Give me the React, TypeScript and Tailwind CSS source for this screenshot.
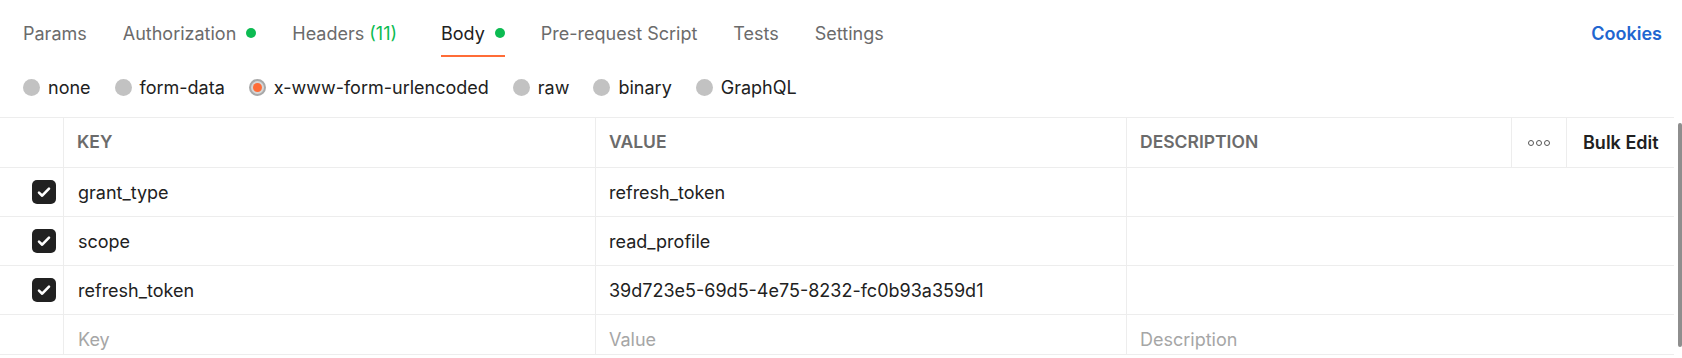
import React from "react";

const tabs = [
  { label: "Params" },
  { label: "Authorization", dot: true },
  { label: "Headers", count: "(11)" },
  { label: "Body", dot: true, active: true },
  { label: "Pre-request Script" },
  { label: "Tests" },
  { label: "Settings" },
];

const bodyTypes = ["none", "form-data", "x-www-form-urlencoded", "raw", "binary", "GraphQL"];

const rows = [
  { key: "grant_type", value: "refresh_token" },
  { key: "scope", value: "read_profile" },
  { key: "refresh_token", value: "39d723e5-69d5-4e75-8232-fc0b93a359d1" },
];

function Checkbox() {
  return (
    <div className="flex size-[24px] items-center justify-center rounded-[5px] bg-[#212121]">
      <svg width="16" height="16" viewBox="0 0 16 16" fill="none">
        <path d="M3 8.6l3.2 3.1L13 4.6" stroke="#fff" strokeWidth="2.6" strokeLinecap="round" strokeLinejoin="round" />
      </svg>
    </div>
  );
}

function Radio({ selected }: { selected: boolean }) {
  if (selected) {
    return (
      <span className="flex size-[17px] items-center justify-center rounded-full border-2 border-[#a8a8a8] bg-[#d6d6d6]">
        <span className="size-[9px] rounded-full bg-[#ff6c37]" />
      </span>
    );
  }
  return <span className="size-[17px] rounded-full bg-[#c2c2c2]" />;
}

export default function App() {
  return (
    <div className="h-[358px] w-[1682px] overflow-hidden bg-white font-['Inter',sans-serif] text-[18px]">
      {/* tab bar */}
      <div className="flex h-[58px] items-stretch pl-[23px] pr-[20px]">
        <div className="flex gap-[36px]">
          {tabs.map((t) => (
            <div key={t.label} className="relative flex items-center gap-[10px] pt-[8px]">
              <span className={t.active ? "text-[#212121]" : "text-[#6b6b6b]"}>
                {t.label}
                {t.count && <span className="ml-[5px] mr-[8px] text-[#0cbb52]">{t.count}</span>}
              </span>
              {t.dot && <span className="size-[10px] rounded-full bg-[#0cbb52]" />}
              {t.active && <span className="absolute bottom-[1px] left-0 right-0 h-[2px] bg-[#ff6c37]" />}
            </div>
          ))}
        </div>
        <div className="ml-auto flex items-center pt-[8px] font-semibold text-[#2166d0]">Cookies</div>
      </div>

      {/* body type radios */}
      <div className="flex h-[59px] items-center gap-[24px] pl-[23px]">
        {bodyTypes.map((b) => (
          <div key={b} className="flex items-center gap-[8px] text-[#212121]">
            <Radio selected={b === "x-www-form-urlencoded"} />
            <span>{b}</span>
          </div>
        ))}
      </div>

      {/* table */}
      <div className="flex">
        <div className="w-[1674px] border-t border-[#ededed]">
          <div className="flex h-[50px] border-b border-[#ededed] text-[17.5px] font-semibold">
            <div className="w-[64px] border-r border-[#ededed]" />
            <div className="flex w-[532px] items-center border-r border-[#ededed] px-[13px] text-[#6b6b6b]">KEY</div>
            <div className="flex w-[531px] items-center border-r border-[#ededed] px-[13px] text-[#6b6b6b]">VALUE</div>
            <div className="flex w-[385px] items-center border-r border-[#ededed] px-[13px] text-[#6b6b6b]">DESCRIPTION</div>
            <div className="flex w-[55px] items-center justify-center gap-[2px] border-r border-[#ededed]">
              <span className="size-[6px] rounded-full border-[1.5px] border-[#555]" />
              <span className="size-[6px] rounded-full border-[1.5px] border-[#555]" />
              <span className="size-[6px] rounded-full border-[1.5px] border-[#555]" />
            </div>
            <div className="flex flex-1 items-center pl-[16px] text-[18px] text-[#212121]">Bulk Edit</div>
          </div>
          {rows.map((r) => (
            <div key={r.key} className="flex h-[49px] border-b border-[#ededed] text-[#212121]">
              <div className="flex w-[64px] items-center border-r border-[#ededed] pl-[32px]">
                <Checkbox />
              </div>
              <div className="flex w-[532px] items-center border-r border-[#ededed] px-[14px]">{r.key}</div>
              <div className="flex w-[531px] items-center border-r border-[#ededed] px-[13px]">{r.value}</div>
              <div className="flex-1" />
            </div>
          ))}
          <div className="flex h-[40px] border-b border-[#ededed] text-[#a6a6a6]">
            <div className="w-[64px] border-r border-[#ededed]" />
            <div className="flex w-[532px] items-center border-r border-[#ededed] px-[14px] pt-[10px]">Key</div>
            <div className="flex w-[531px] items-center border-r border-[#ededed] px-[13px] pt-[10px]">Value</div>
            <div className="flex flex-1 items-center px-[13px] pt-[10px]">Description</div>
          </div>
        </div>
        <div className="flex w-[8px] justify-end pt-[6px] pb-[8px]">
          <div className="w-[4px] rounded-full bg-[#8e8e8e]" />
        </div>
      </div>
    </div>
  );
}
